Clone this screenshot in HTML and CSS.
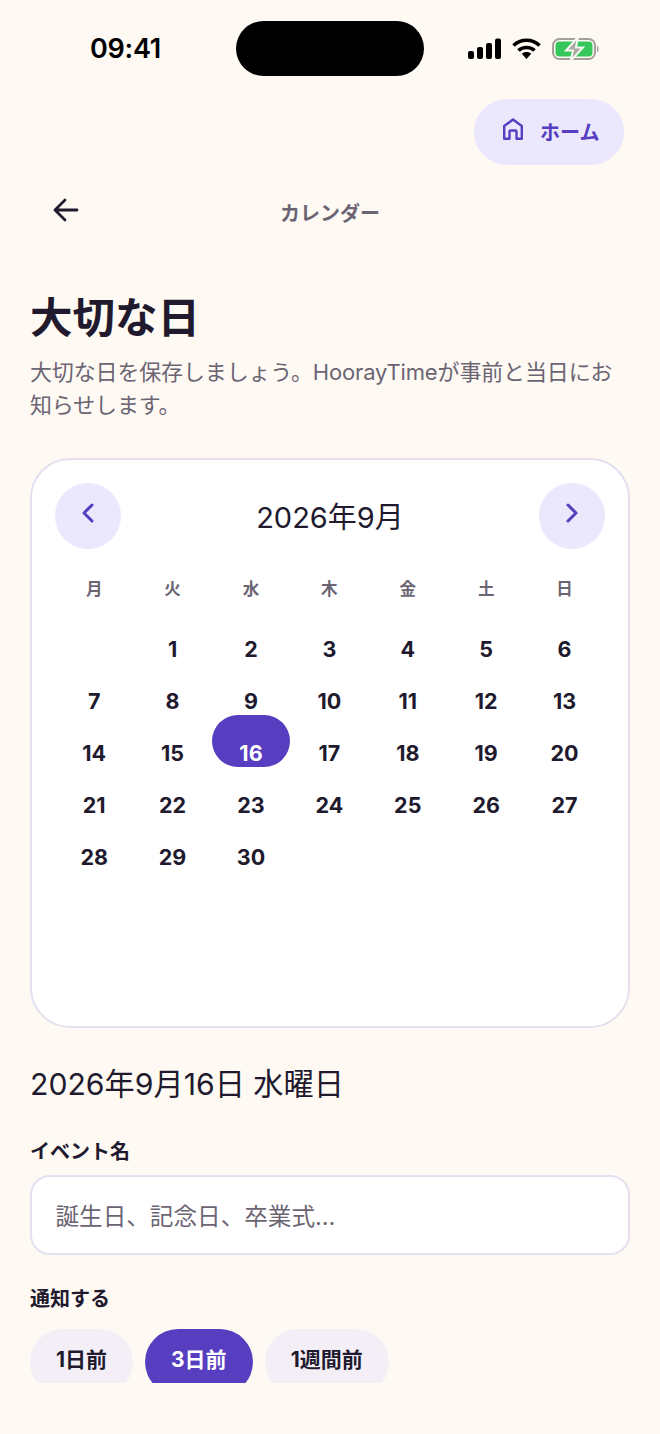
FILE: index.html
```html
<!DOCTYPE html>
<html lang="ja">
<head>
<meta charset="utf-8">
<title>大切な日</title>
<link rel="stylesheet" href="styles.css">
</head>
<body>
<div class="screen">
  <div class="status">
    <span class="time">09:41</span>
    <div class="island"></div>
    <div class="status-icons">
      <svg class="i-signal" width="34" height="22" viewBox="0 0 34 22"><rect x="0" y="13" width="6" height="8" rx="2"/><rect x="9" y="9" width="6" height="12" rx="2"/><rect x="18" y="5" width="6" height="16" rx="2"/><rect x="27" y="0.500" width="6" height="20.500" rx="2"/></svg>
      <svg class="i-wifi" width="29" height="22" viewBox="0 0 29 22"><path d="M1.500 7.500C8.500 0.500 20.500 0.500 27.500 7.500" fill="none" stroke="#000" stroke-width="3.600"/><path d="M6.500 12.500C10.500 8.500 18.500 8.500 22.500 12.500" fill="none" stroke="#000" stroke-width="3.600"/><path d="M9.800 15.800C12 13.400 17 13.400 19.200 15.800L14.500 21Z"/></svg>
      <svg class="i-batt" width="47" height="24" viewBox="0 0 47 24"><rect x="1" y="2" width="42" height="20" rx="6.500" fill="none" stroke="#a3a09b" stroke-width="2"/><path d="M45 8.500c2 .5 2 6.500 0 7z" fill="#a3a09b"/><rect x="3.500" y="4.500" width="37" height="15" rx="4" fill="#35c759"/><path d="M26 0L14 13.500H21L18.500 24L31 10.500H24Z" fill="#a9a6a1" stroke="#f4f8f0" stroke-width="2"/></svg>
    </div>
  </div>

  <div class="home-row">
    <a class="home-btn">
      <svg class="home-icon" width="20" height="22" viewBox="0 0 20 22" fill="none" stroke="#573dc0" stroke-width="2.400" stroke-linejoin="round"><path d="M1.200 20.800V8L10 1.500L18.800 8V20.800H13.500V13.500Q13.500 12.500 12.500 12.500H7.500Q6.500 12.500 6.500 13.500V20.800Z"/></svg>
      <span>ホーム</span>
    </a>
  </div>

  <div class="nav">
    <svg class="back" width="28" height="26" viewBox="0 0 28 26" fill="none" stroke="#211a2e" stroke-width="2.800" stroke-linecap="round" stroke-linejoin="round"><path d="M3 13H25M13 3L3 13L13 23"/></svg>
    <span class="nav-title">カレンダー</span>
  </div>

  <main class="content">
    <h1>大切な日</h1>
    <p class="lead">大切な日を保存しましょう。HoorayTimeが事前と当日にお知らせします。</p>

    <section class="card">
      <div class="cal-head">
        <button class="round"><svg width="14" height="20" viewBox="0 0 14 20" fill="none" stroke="#573dc0" stroke-width="3" stroke-linecap="round" stroke-linejoin="round"><path d="M11 2L3 10L11 18"/></svg></button>
        <span class="month">2026年9月</span>
        <button class="round"><svg width="14" height="20" viewBox="0 0 14 20" fill="none" stroke="#573dc0" stroke-width="3" stroke-linecap="round" stroke-linejoin="round"><path d="M3 2L11 10L3 18"/></svg></button>
      </div>
      <div class="week"><span>月</span><span>火</span><span>水</span><span>木</span><span>金</span><span>土</span><span>日</span></div>
      <div class="days">
        <span></span><span>1</span><span>2</span><span>3</span><span>4</span><span>5</span><span>6</span>
        <span>7</span><span>8</span><span>9</span><span>10</span><span>11</span><span>12</span><span>13</span>
        <span>14</span><span>15</span><span class="sel">16</span><span>17</span><span>18</span><span>19</span><span>20</span>
        <span>21</span><span>22</span><span>23</span><span>24</span><span>25</span><span>26</span><span>27</span>
        <span>28</span><span>29</span><span>30</span>
      </div>
    </section>

    <h2>2026年9月16日 水曜日</h2>

    <label class="label first">イベント名</label>
    <div class="input">誕生日、記念日、卒業式...</div>

    <label class="label second">通知する</label>
    <div class="chips">
      <span class="chip">1日前</span>
      <span class="chip on">3日前</span>
      <span class="chip">1週間前</span>
    </div>
  </main>
</div>
</body>
</html>
```

FILE: styles.css
```css
* { box-sizing: border-box; }
html, body { margin: 0; padding: 0; }
body {
  background: #fff9f3;
  color: #211a2e;
  font-family: Inter, "Noto Sans CJK JP", sans-serif;
}
.screen {
  width: 660px;
  height: 1434px;
  overflow: hidden;
  display: flex;
  flex-direction: column;
}
.status {
  height: 99px;
  padding: 21px 0 0 90px;
  display: flex;
  align-items: flex-start;
}
.time {
  width: 146px;
  margin-top: 11px;
  font-size: 27px;
  line-height: 34px;
  font-weight: 600;
  letter-spacing: -0.25px;
  color: #000;
}
.island {
  width: 188px;
  height: 55px;
  border-radius: 28px;
  background: #000;
}
.status-icons {
  display: flex;
  align-items: center;
  gap: 10px;
  margin: 16px 0 0 44px;
}
.i-batt { margin-left: 1px; }
.home-row {
  display: flex;
  justify-content: flex-end;
  padding-right: 36px;
}
.home-btn {
  height: 66px;
  width: 150px;
  border-radius: 33px;
  background: #ebe7fd;
  color: #573dc0;
  display: flex;
  align-items: center;
  gap: 17px;
  padding: 0 0 2px 29px;
  font-size: 20px;
  font-weight: 700;
}
.home-icon { margin-top: -4px; }
.nav {
  height: 58px;
  margin-top: 16px;
  position: relative;
  display: flex;
  justify-content: center;
  align-items: center;
}
.back {
  position: absolute;
  left: 52px;
  top: 16px;
}
.nav-title {
  margin-top: 5px;
  font-size: 20px;
  font-weight: 600;
  color: #6b6573;
}
.content {
  padding: 0 30px;
}
h1 {
  margin: 51px 0 0;
  font-size: 42.500px;
  line-height: 56px;
  font-weight: 700;
}
.lead {
  margin: 10px 0 0;
  font-size: 22px;
  line-height: 33px;
  letter-spacing: -0.15px;
  color: #6b6573;
}
.card {
  margin-top: 36px;
  height: 570px;
  background: #fff;
  border: 2px solid #e5e0ef;
  border-radius: 40px;
  padding: 23px 23px 0;
}
.cal-head {
  display: flex;
  justify-content: space-between;
  align-items: center;
}
.round {
  width: 66px;
  height: 66px;
  border: 0;
  padding: 0 0 6px;
  border-radius: 50%;
  background: #ebe7fd;
  display: flex;
  align-items: center;
  justify-content: center;
}
.month {
  font-size: 29px;
  font-weight: 400;
  line-height: 40px;
  margin-top: 4px;
}
.week, .days {
  display: grid;
  grid-template-columns: repeat(7, 78.400px);
  text-align: center;
}
.week {
  margin-top: 28px;
  font-size: 16.500px;
  line-height: 24px;
  font-weight: 600;
  color: #6b6573;
}
.days {
  margin-top: 10px;
  grid-auto-rows: 52px;
  font-size: 21.500px;
  line-height: 28px;
  font-weight: 700;
}
.days span {
  padding-top: 24px;
  height: 52px;
}
.days .sel {
  background: #573dc0;
  color: #fff;
  border-radius: 26px;
}
h2 {
  margin: 36px 0 0;
  font-size: 30.200px;
  line-height: 40px;
  font-weight: 400;
}
.label {
  display: block;
  font-size: 20px;
  line-height: 26px;
  font-weight: 700;
}
.first { margin-top: 35px; }
.second { margin-top: 31px; }
.input {
  margin-top: 10px;
  height: 80px;
  background: #fff;
  border: 2px solid #e5e0ef;
  border-radius: 20px;
  padding: 0 23.500px;
  display: flex;
  align-items: center;
  font-size: 23.600px;
  color: #6b6573;
}
.chips {
  margin-top: 17px;
  height: 54px;
  overflow: hidden;
  display: flex;
  gap: 12px;
  align-items: flex-start;
}
.chip {
  height: 66px;
  border-radius: 33px;
  padding: 0 26px 8px;
  background: #f4eff7;
  display: flex;
  align-items: center;
  font-size: 21px;
  font-weight: 700;
}
.chip.on {
  background: #573dc0;
  color: #fff;
}
```
